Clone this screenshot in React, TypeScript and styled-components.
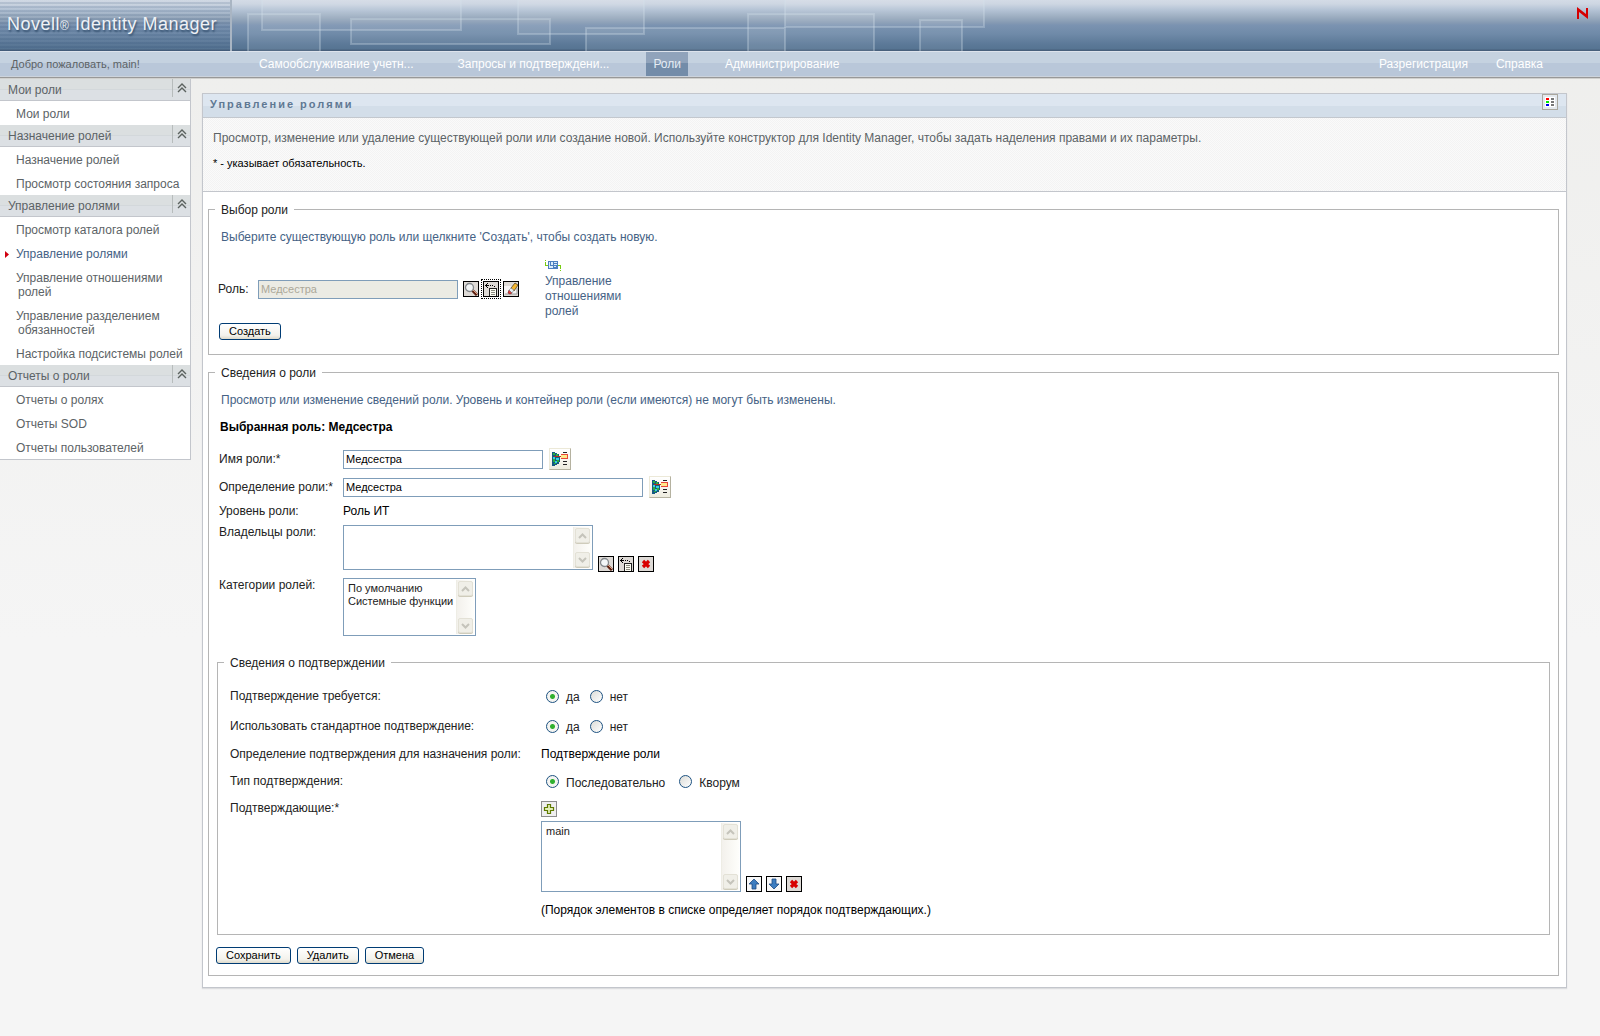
import React from 'react';
import styled, { createGlobalStyle } from 'styled-components';

const sans = '"Liberation Sans", Arial, sans-serif';

const GlobalStyle = createGlobalStyle`
  *, *::before, *::after { box-sizing: border-box; }
  body {
    margin: 0;
    min-height: 100vh;
    background: linear-gradient(#eeeeec, #f5f5f5 640px);
    color: #222;
    font: 12px/15px ${sans};
  }
  input, button, select { font-family: ${sans}; }
  a { color: inherit; text-decoration: none; }
  svg { display: block; flex: none; }
`;

/* ---------- header ---------- */

const Banner = styled.header`
  display: flex;
  height: 51px;
  overflow: hidden;
  background: linear-gradient(
    #d3dbe6 0, #cdd6e2 4px, #b4c3d5 10px, #9cadc0 17px, #8499b2 23px,
    #7b93b1 25px, #6f8aa8 34px, #5c7998 44px, #567492 49px, #48607c 50px
  );
`;

const Brand = styled.div`
  flex: none;
  width: 232px;
  padding: 13px 0 0 7px;
  border-right: 2px solid #a9b5c3;
  background: repeating-linear-gradient(rgba(40, 70, 110, 0.02) 0 2px, rgba(40, 70, 110, 0.16) 2px 4px);
  color: #eef1f5;
  font-size: 18px;
  line-height: 22px;
  letter-spacing: 0.5px;
  white-space: nowrap;
  text-shadow: 1px 2px 2px #34506e;

  small { font-size: 12px; }
`;

const BannerEnd = styled.div`
  margin-left: auto;
  padding: 7px 12px 0 0;
`;

const NavBar = styled.nav`
  display: flex;
  align-items: flex-start;
  height: 28px;
  padding: 0 57px 0 4px;
  border-top: 1px solid #dde3ec;
  border-bottom: 1px solid #d0d0ce;
  background: linear-gradient(#c5d2e0 0 11px, #b9c7d9 11px 24px, #ccd3dc 24px 25px, #989898 25px);
  color: #fff;
  line-height: 24px;
  white-space: nowrap;
`;

const Welcome = styled.span`
  width: 248px;
  padding-left: 7px;
  color: #5c6366;
  font-size: 11px;
`;

const NavLink = styled.a<{ $active?: boolean }>`
  height: 24px;
  margin-right: 30px;
  padding: 0 7px;
  ${(p) => p.$active && 'background: linear-gradient(#90a3bb 0 11px, #738ca9 11px); color: #e6edf5;'}
`;

const NavEnd = styled.div`
  display: flex;
  gap: 28px;
  margin-left: auto;
`;

/* ---------- layout ---------- */

const Page = styled.div`
  display: flex;
  align-items: flex-start;
`;

const Sidebar = styled.aside`
  flex: none;
  width: 191px;
  border: solid #c3c6cc;
  border-width: 0 1px 1px 0;
  background: #fff;
  color: #5c6366;
`;

const MenuHead = styled.h2`
  display: flex;
  justify-content: space-between;
  height: 22px;
  margin: 0;
  padding-left: 8px;
  border-bottom: 1px solid #c3c6cc;
  background: linear-gradient(#dbdfe0 0 10px, #d3d8db 10px 11px, #dce0e4 11px);
  font-size: 12px;
  font-weight: 400;
  line-height: 23px;
`;

const Collapse = styled.button`
  width: 18px;
  height: 18px;
  padding: 0 0 0 4px;
  border: 0;
  border-left: 1px solid #b7bcbc;
  background: none;
`;

const Menu = styled.ul`
  margin: 0;
  padding: 0;
  list-style: none;
`;

const MenuItem = styled.li<{ $current?: boolean }>`
  display: flex;
  padding: 6px 0 4px 4px;
  line-height: 14px;
  white-space: nowrap;
  color: ${(p) => (p.$current ? '#456285' : 'inherit')};
`;

const Marker = styled.span`
  display: flex;
  align-items: center;
  flex: none;
  width: 14px;
`;

const MenuLink = styled.a`
  display: block;
  text-indent: -2px;
  white-space: pre-line;
`;

const Panel = styled.main`
  flex: 1;
  min-width: 0;
  margin: 14px 33px 24px 11px;
  border: 1px solid #c3c6cc;
  background: #fff;
  box-shadow: 0 1px 1px #dcdddf;
`;

const PanelTitle = styled.div`
  display: flex;
  justify-content: space-between;
  height: 24px;
  padding: 0 8px 0 7px;
  border-bottom: 1px solid #c3c8ce;
  background: linear-gradient(#dde6f0 0 12px, #d3dee9 12px);
`;

const Title = styled.h1`
  margin: 0;
  color: #5f7893;
  font-size: 11px;
  line-height: 21px;
  letter-spacing: 2px;
`;

const Intro = styled.section`
  height: 74px;
  padding: 13px 10px 0;
  border-bottom: 1px solid #c3c6cc;
  background: repeating-conic-gradient(#f3f3f3 0 25%, #fafafa 0 50%) 0 0 / 2px 2px;
  color: #5c6366;

  p { margin: 0 0 10px; }
`;

const Note = styled.p`
  color: #000;
  font-size: 11px;
`;

const PanelBody = styled.form`
  display: flex;
  flex-direction: column;
  gap: 9px;
  padding: 9px 7px 11px 5px;
`;

const Group = styled.fieldset<{ $inset?: boolean }>`
  min-width: 0;
  margin: ${(p) => (p.$inset ? '18px 8px 0' : '0')};
  padding: 0;
  border: 1px solid #b5b5b5;
`;

const Legend = styled.legend`
  margin-left: 6px;
  padding: 2px 6px 0;
`;

const Hint = styled.p`
  margin: 12px 12px 0;
  color: #456285;
`;

const Selected = styled.p`
  margin: 12px 11px 13px;
  color: #000;
  font-weight: 700;
`;

/* ---------- form parts ---------- */

const PickRow = styled.div`
  display: flex;
  align-items: center;
  margin: 14px 9px 4px;
`;

const PickLabel = styled.label`
  width: 40px;
`;

const RelationLink = styled.a`
  width: 90px;
  margin-left: 26px;
  color: #456285;
`;

const Rows = styled.div<{ $wide?: boolean }>`
  display: grid;
  grid-template-columns: ${(p) => (p.$wide ? '311px' : '124px')} 1fr;
  gap: ${(p) => (p.$wide ? '12px' : '6px')} 0;
  padding: ${(p) => (p.$wide ? '16px 12px' : '0 10px')};
`;

const Name = styled.label<{ $top?: boolean }>`
  align-self: ${(p) => (p.$top ? 'start' : 'center')};
  white-space: nowrap;
`;

const Value = styled.div<{ $tall?: boolean }>`
  display: flex;
  align-items: center;
  min-height: ${(p) => (p.$tall ? '18px' : '15px')};
  color: #000;
`;

const KindRow = styled(Value)`
  height: 15px;
  gap: 4px;
`;

const ListValue = styled.div`
  display: flex;
  align-items: flex-start;
  gap: 5px;
`;

const Stack = styled.div`
  display: flex;
  flex-direction: column;
  align-items: flex-start;
  gap: 4px;
  color: #000;

  p { margin: 7px 0 0; }
`;

const TextBox = styled.input<{ $w: number }>`
  width: ${(p) => p.$w}px;
  height: 19px;
  padding: 0 2px;
  border: 1px solid #7f9db9;
  background: #fff;
  color: #000;
  font-size: 11px;
  &:disabled { background: #ebebe4; color: #aca899; }
`;

const Tools = styled.div`
  display: flex;
  align-self: flex-end;
  gap: 4px;
`;

const OwnerTools = styled(Tools)`
  padding-top: 31px;
`;

const PickTools = styled(Tools)`
  align-self: center;
  margin-left: 5px;
`;

const IconButton = styled.button<{ $focus?: boolean; $soft?: boolean }>`
  width: 16px;
  height: 16px;
  padding: 0;
  border: 1px solid ${(p) => (p.$soft ? '#8c8c8c' : '#000')};
  background: ${(p) => (p.$soft ? '#efefef' : '#dedad6')};
  outline: ${(p) => (p.$focus ? '1px dotted #000' : 'none')};
  outline-offset: 1px;
`;

const GlobeButton = styled.button`
  width: 22px;
  height: 22px;
  margin-left: 6px;
  padding: 2px;
  border: 1px solid;
  border-color: #ece9d8 #b5b2a0 #b5b2a0 #ece9d8;
  background: linear-gradient(#fff, #eeecdf);
`;

const ViewButton = styled.button`
  width: 16px;
  height: 16px;
  padding: 2px;
  border: 1px solid #aaa79e;
  background: #e4e9ee;
`;

const PushButton = styled.button`
  height: 17px;
  padding: 0 9px;
  border: 1px solid #003c74;
  border-radius: 3px;
  background: linear-gradient(#fff, #f3f2ec 75%, #dedacb);
  color: #000;
  font-size: 11px;
  line-height: 15px;
`;

const CreateRow = styled.div`
  padding: 0 10px 14px;
`;

const Actions = styled.div`
  display: flex;
  gap: 6px;
  padding: 12px 7px 11px;
`;

const ListFrame = styled.div<{ $w: number; $h: number }>`
  display: flex;
  width: ${(p) => p.$w}px;
  height: ${(p) => p.$h}px;
  padding: 1px;
  border: 1px solid #7f9db9;
  background: #fff;
`;

const List = styled.select`
  flex: 1;
  min-width: 0;
  height: 100%;
  padding: 2px 0 0 1px;
  border: 0;
  outline: 0;
  overflow: hidden;
  background: none;
  color: #222;
  font-size: 11px;

  option { min-height: 13px; padding: 0 2px; line-height: 13px; }
`;

const ScrollTrack = styled.span`
  display: flex;
  flex-direction: column;
  justify-content: space-between;
  width: 18px;
  padding: 1px;
  border-left: 1px solid #eeede5;
  background: linear-gradient(90deg, #f3f1ec, #fefefb);
`;

const ScrollCap = styled.span`
  display: flex;
  align-items: center;
  justify-content: center;
  width: 15px;
  height: 15px;
  border: 1px solid #e3e1d6;
  border-radius: 2px;
  background: #f0efe8;
  box-shadow: 0 1px #cfccbb;
`;

const Choice = styled.label`
  display: flex;
  align-items: center;
  gap: 7px;
  margin: 0 5px;
  color: #222;

  span { padding-top: 3px; }
`;

const Radio = styled.input`
  appearance: none;
  width: 13px;
  height: 13px;
  margin: 0;
  border: 1px solid #1d5281;
  border-radius: 50%;
  background: linear-gradient(135deg, #dcdcd7, #fff);
  &:checked { background: radial-gradient(circle, #2fb02f 0 2px, #f4f4f1 3px); }
`;

/* ---------- drawings ---------- */

const BannerArt = () => (
  <svg width="780" height="51" fill="#fff" fillOpacity=".07" stroke="#d5e0ea" strokeOpacity=".3" strokeWidth="2" aria-hidden="true">
    <rect x="16" y="14" width="72" height="50" />
    <rect x="30" y="-9" width="199" height="39" />
    <rect x="119" y="19" width="199" height="25" />
    <rect x="286" y="-9" width="126" height="43" />
    <rect x="354" y="28" width="199" height="40" />
    <rect x="516" y="14" width="126" height="50" />
    <rect x="553" y="-9" width="199" height="36" />
    <rect x="688" y="20" width="42" height="50" />
  </svg>
);

const NMark = () => (
  <svg width="11" height="12" viewBox="0 0 11 12" aria-label="N">
    <path d="M0 12V0l9 7V1h2v11L2 5v7z" fill="#d60000" />
  </svg>
);

const Chevrons = () => (
  <svg width="10" height="10" viewBox="0 0 10 10" fill="none" stroke="#5b625f" strokeWidth="1.4" aria-hidden="true">
    <path d="M1 5l4-4 4 4M1 9l4-4 4 4" />
  </svg>
);

const Pointer = () => (
  <svg width="5" height="7" viewBox="0 0 5 7" aria-hidden="true"><path d="M1 0l4 3.5L1 7z" fill="#d00010" /></svg>
);

const ViewIcon = () => (
  <svg width="10" height="10" shapeRendering="crispEdges" aria-hidden="true">
    <path fill="#fff" d="M0 0h10v10H0z" />
    <path fill="#f00" d="M1 1h3v2H1z" /><path fill="#0e0" d="M1 4h3v2H1z" /><path fill="#00e" d="M1 7h3v2H1z" />
    <path fill="#777" d="M6 1h3v2H6zM6 4h3v2H6zM6 7h3v2H6z" />
  </svg>
);

const RelationIcon = () => (
  <svg width="17" height="15" shapeRendering="crispEdges" aria-hidden="true">
    <path fill="#77cc11" d="M0 1h1v1H0zM0 3h1v3H0zM0 6h4v1H0zM13 6h3v1h-3zM15 7h1v3h-1zM15 11h1v1h-1z" />
    <path fill="#4b7fc0" d="M3 2h10v8H3z" />
    <path fill="#d9ebfb" d="M4 3h1v6H4zM6 3h2v3H6zM5 7h3v2H5zM9 3h3v1H9zM9 5h3v1H9zM9 7h2v1H9z" />
  </svg>
);

const Lens = () => (
  <svg width="14" height="14" viewBox="0 0 14 14" aria-hidden="true">
    <path d="M8 8l5 5" stroke="#5c1f10" strokeWidth="3" />
    <path d="M9 8l4 4" stroke="#e0a080" />
    <circle cx="5.5" cy="5.5" r="4" fill="#f4f7f8" stroke="#84888c" strokeWidth="1.3" />
  </svg>
);

const History = () => (
  <svg width="14" height="14" shapeRendering="crispEdges" aria-hidden="true">
    <path d="M1 3h4v1H1zM2 2h1v3H2zM3 1h1v1H3zM3 5h1v1H3zM6 3h1v1H6zM8 3h1v1H8zM10 4h1v1h-1z" fill="#000" />
    <path d="M5 6h8v8H5z" fill="#222" />
    <path d="M6 7h6v7H6z" fill="#fdfdf4" />
    <path d="M7 8h4v1H7zM7 10h4v1H7zM7 12h4v1H7z" fill="#8c8c80" />
  </svg>
);

const Eraser = () => (
  <svg width="14" height="14" viewBox="0 0 14 14" aria-hidden="true">
    <path d="M0 4h13v8H0z" fill="#f6f4f4" /><path d="M1 12h12V6" stroke="#9a9a9a" fill="none" />
    <path d="M7 6l4-5 3 2-4 6z" fill="#f5b731" stroke="#3b2c12" strokeWidth=".7" />
    <path d="M5 8l3 3-2 1-2-1z" fill="#e33b3b" stroke="#6b1212" strokeWidth=".6" />
    <path d="M7 6l3 2-2 3-3-3z" fill="#e8edf2" stroke="#444" strokeWidth=".4" />
  </svg>
);

const Cross = () => (
  <svg width="14" height="14" viewBox="0 0 14 14" aria-hidden="true">
    <path d="M4 4l6 6M10 4l-6 6" stroke="#d80000" strokeWidth="3.2" />
  </svg>
);

const Arrow = ({ down }: { down?: boolean }) => (
  <svg width="14" height="14" viewBox="0 0 14 14" aria-hidden="true">
    <path fill="#f8f8f8" d="M0 0h14v14H0z" />
    <path
      d={down ? 'M5 2h4v5h3l-5 5-5-5h3z' : 'M5 12h4V7h3L7 2 2 7h3z'}
      fill="#3d7dc0" stroke="#204a80" strokeWidth=".8"
    />
  </svg>
);

const Plus = () => (
  <svg width="14" height="14" viewBox="0 0 14 14" aria-hidden="true">
    <path d="M5.500 2.500h3v3h3v3h-3v3h-3v-3h-3v-3h3z" fill="#e3efb8" stroke="#5f7a00" strokeWidth="1.2" />
  </svg>
);

const Globe = () => (
  <svg width="16" height="16" shapeRendering="crispEdges" aria-hidden="true">
    <path d="M0 1h3v1h2v1h2v2h1v6H7v2H5v1H3v1H0z" fill="#155a82" />
    <path d="M1 2h2v2H1zM4 3h2v2H4zM1 8h2v3H1zM5 9h2v2H5zM2 12h2v1H2z" fill="#2fae3c" />
    <path d="M1 6h2v2H1zM4 7h3v2H4zM3 10h2v2H3z" fill="#35cfe0" />
    <path d="M2 5h7v1H2z" fill="#b5301c" />
    <path d="M9 3h7v5H9z" fill="#e8463a" /><path d="M9 4h6v3H9z" fill="#ffe88a" />
    <path d="M11 1h4v1h-4zM11 10h4v1h-4zM11 13h4v1h-4z" fill="#222" />
  </svg>
);

const CapArrow = ({ down }: { down?: boolean }) => (
  <svg width="9" height="6" viewBox="0 0 9 6" fill="none" stroke="#c5c4bb" strokeWidth="2" aria-hidden="true">
    <path d={down ? 'M1 1l3.500 3.500L8 1' : 'M1 5l3.500-3.500L8 5'} />
  </svg>
);

/* ---------- composed parts ---------- */

type ListBoxProps = { id: string; w: number; h: number; items: string[] };

const ListBox = ({ id, w, h, items }: ListBoxProps) => (
  <ListFrame $w={w} $h={h}>
    <List id={id} multiple>
      {items.map((item) => <option key={item}>{item}</option>)}
    </List>
    <ScrollTrack aria-hidden="true">
      <ScrollCap><CapArrow /></ScrollCap>
      <ScrollCap><CapArrow down /></ScrollCap>
    </ScrollTrack>
  </ListFrame>
);

const YesNo = ({ name }: { name: string }) => (
  <Value $tall role="radiogroup" aria-labelledby={`${name}-label`}>
    <Choice><Radio type="radio" name={name} defaultChecked /><span>да</span></Choice>
    <Choice><Radio type="radio" name={name} /><span>нет</span></Choice>
  </Value>
);

const menu = [
  { title: 'Мои роли', items: ['Мои роли'] },
  { title: 'Назначение ролей', items: ['Назначение ролей', 'Просмотр состояния запроса'] },
  {
    title: 'Управление ролями',
    items: [
      'Просмотр каталога ролей',
      'Управление ролями',
      'Управление отношениями\nролей',
      'Управление разделением\nобязанностей',
      'Настройка подсистемы ролей',
    ],
  },
  { title: 'Отчеты о роли', items: ['Отчеты о ролях', 'Отчеты SOD', 'Отчеты пользователей'] },
];

const tabs = ['Самообслуживание учетн...', 'Запросы и подтверждени...', 'Роли', 'Администрирование'];

export default function App() {
  return (
    <>
      <GlobalStyle />
      <Banner>
        <Brand>Novell<small>®</small> Identity Manager</Brand>
        <BannerArt />
        <BannerEnd><NMark /></BannerEnd>
      </Banner>
      <NavBar>
        <Welcome>Добро пожаловать, main!</Welcome>
        {tabs.map((tab) => <NavLink key={tab} href="#" $active={tab === 'Роли'}>{tab}</NavLink>)}
        <NavEnd>
          <a href="#">Разрегистрация</a>
          <a href="#">Справка</a>
        </NavEnd>
      </NavBar>

      <Page>
        <Sidebar>
          {menu.map((group) => (
            <section key={group.title}>
              <MenuHead>
                {group.title}
                <Collapse type="button" aria-label="Свернуть"><Chevrons /></Collapse>
              </MenuHead>
              <Menu>
                {group.items.map((item) => {
                  const current = item === 'Управление ролями';
                  return (
                    <MenuItem key={item} $current={current}>
                      <Marker>{current && <Pointer />}</Marker>
                      <MenuLink href="#">{item}</MenuLink>
                    </MenuItem>
                  );
                })}
              </Menu>
            </section>
          ))}
        </Sidebar>

        <Panel>
          <PanelTitle>
            <Title>Управление ролями</Title>
            <ViewButton type="button" aria-label="Вид"><ViewIcon /></ViewButton>
          </PanelTitle>
          <Intro>
            <p>Просмотр, изменение или удаление существующей роли или создание новой. Используйте конструктор для Identity Manager, чтобы задать наделения правами и их параметры.</p>
            <Note>* - указывает обязательность.</Note>
          </Intro>

          <PanelBody>
            <Group>
              <Legend>Выбор роли</Legend>
              <Hint>Выберите существующую роль или щелкните 'Создать', чтобы создать новую.</Hint>
              <PickRow>
                <PickLabel htmlFor="role">Роль:</PickLabel>
                <TextBox id="role" $w={200} defaultValue="Медсестра" disabled />
                <PickTools>
                  <IconButton type="button" aria-label="Поиск"><Lens /></IconButton>
                  <IconButton type="button" aria-label="Журнал" $focus><History /></IconButton>
                  <IconButton type="button" aria-label="Очистить"><Eraser /></IconButton>
                </PickTools>
                <RelationLink href="#">
                  <RelationIcon />
                  Управление отношениями ролей
                </RelationLink>
              </PickRow>
              <CreateRow><PushButton type="button">Создать</PushButton></CreateRow>
            </Group>

            <Group>
              <Legend>Сведения о роли</Legend>
              <Hint>Просмотр или изменение сведений роли. Уровень и контейнер роли (если имеются) не могут быть изменены.</Hint>
              <Selected>Выбранная роль: Медсестра</Selected>
              <Rows>
                <Name htmlFor="name">Имя роли:*</Name>
                <Value>
                  <TextBox id="name" $w={200} defaultValue="Медсестра" />
                  <GlobeButton type="button" aria-label="Языки имени"><Globe /></GlobeButton>
                </Value>
                <Name htmlFor="definition">Определение роли:*</Name>
                <Value>
                  <TextBox id="definition" $w={300} defaultValue="Медсестра" />
                  <GlobeButton type="button" aria-label="Языки определения"><Globe /></GlobeButton>
                </Value>
                <Name as="span">Уровень роли:</Name>
                <Value>Роль ИТ</Value>
                <Name htmlFor="owners" $top>Владельцы роли:</Name>
                <ListValue>
                  <ListBox id="owners" w={250} h={45} items={[]} />
                  <OwnerTools>
                    <IconButton type="button" aria-label="Поиск"><Lens /></IconButton>
                    <IconButton type="button" aria-label="Журнал"><History /></IconButton>
                    <IconButton type="button" aria-label="Удалить"><Cross /></IconButton>
                  </OwnerTools>
                </ListValue>
                <Name htmlFor="categories" $top>Категории ролей:</Name>
                <ListValue>
                  <ListBox id="categories" w={133} h={58} items={['По умолчанию', 'Системные функции']} />
                </ListValue>
              </Rows>

              <Group $inset>
                <Legend>Сведения о подтверждении</Legend>
                <Rows $wide>
                  <Name as="span" id="required-label">Подтверждение требуется:</Name>
                  <YesNo name="required" />
                  <Name as="span" id="standard-label">Использовать стандартное подтверждение:</Name>
                  <YesNo name="standard" />
                  <Name as="span">Определение подтверждения для назначения роли:</Name>
                  <Value>Подтверждение роли</Value>
                  <Name as="span" id="kind-label">Тип подтверждения:</Name>
                  <KindRow role="radiogroup" aria-labelledby="kind-label">
                    <Choice><Radio type="radio" name="kind" defaultChecked /><span>Последовательно</span></Choice>
                    <Choice><Radio type="radio" name="kind" /><span>Кворум</span></Choice>
                  </KindRow>
                  <Name htmlFor="approvers" $top>Подтверждающие:*</Name>
                  <Stack>
                    <IconButton type="button" aria-label="Добавить" $soft><Plus /></IconButton>
                    <ListValue>
                      <ListBox id="approvers" w={200} h={71} items={['main']} />
                      <Tools>
                        <IconButton type="button" aria-label="Вверх"><Arrow /></IconButton>
                        <IconButton type="button" aria-label="Вниз"><Arrow down /></IconButton>
                        <IconButton type="button" aria-label="Удалить"><Cross /></IconButton>
                      </Tools>
                    </ListValue>
                    <p>(Порядок элементов в списке определяет порядок подтверждающих.)</p>
                  </Stack>
                </Rows>
              </Group>

              <Actions>
                <PushButton type="button">Сохранить</PushButton>
                <PushButton type="button">Удалить</PushButton>
                <PushButton type="button">Отмена</PushButton>
              </Actions>
            </Group>
          </PanelBody>
        </Panel>
      </Page>
    </>
  );
}
